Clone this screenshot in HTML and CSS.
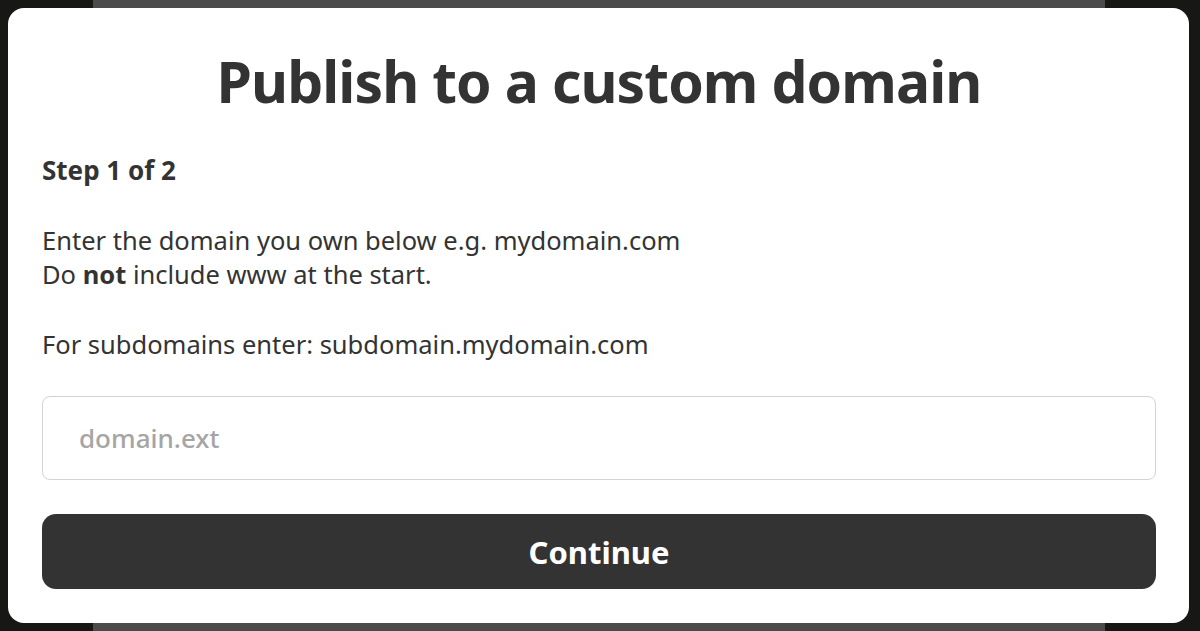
FILE: index.html
```html
<!DOCTYPE html>
<html lang="en">
<head>
<meta charset="utf-8">
<title>Publish to a custom domain</title>
<link rel="stylesheet" href="styles.css">
</head>
<body>
<div class="backdrop">
  <div class="page"></div>
</div>
<div class="modal" role="dialog" aria-labelledby="modal-title">
  <h1 id="modal-title" class="modal-title">Publish to a custom domain</h1>
  <p class="step">Step 1 of 2</p>
  <p class="text">Enter the domain you own below e.g. mydomain.com<br>Do <strong>not</strong> include www at the start.</p>
  <p class="text">For subdomains enter: subdomain.mydomain.com</p>
  <input class="domain-input" type="text" placeholder="domain.ext">
  <button class="continue-btn" type="button">Continue</button>
</div>
</body>
</html>
```
FILE: styles.css
```css
html, body {
  margin: 0;
  padding: 0;
  height: 100%;
}
body {
  background: #171716;
  font-family: "Noto Sans", "Open Sans", sans-serif;
  color: #333333;
  overflow: hidden;
}
.backdrop {
  height: 631px;
  display: flex;
}
.page {
  margin: 0 95px 0 93px;
  flex: 1;
  background: #4b4b4b;
}
.modal {
  position: absolute;
  left: 8px;
  top: 8px;
  width: 1181px;
  height: 615px;
  box-sizing: border-box;
  background: #ffffff;
  border-radius: 16px;
  padding: 0 33px 0 34px;
  display: flex;
  flex-direction: column;
}
.modal-title {
  margin: 36px 0 0;
  text-align: center;
  font-size: 57px;
  line-height: 74px;
  font-weight: 700;
  letter-spacing: -0.9px;
}
.step {
  margin: 37px 0 0;
  font-size: 26px;
  line-height: 30px;
  font-weight: 700;
}
.text {
  margin: 38px 0 0;
  font-size: 25.5px;
  line-height: 34px;
  font-weight: 400;
}
.text + .text {
  margin-top: 36px;
}
.text strong {
  font-weight: 700;
}
.domain-input {
  margin-top: 35px;
  height: 84px;
  box-sizing: border-box;
  border: 1.5px solid #d3d3d3;
  border-radius: 8px;
  padding: 0 36px;
  font-family: inherit;
  font-size: 26px;
  font-weight: 500;
  color: #333;
  outline: none;
}
.domain-input::placeholder {
  color: #a5a5a5;
}
.continue-btn {
  margin-top: 34px;
  height: 75px;
  border: none;
  border-radius: 14px;
  background: #333333;
  color: #ffffff;
  font-family: inherit;
  font-size: 31px;
  font-weight: 700;
  cursor: pointer;
}
```
